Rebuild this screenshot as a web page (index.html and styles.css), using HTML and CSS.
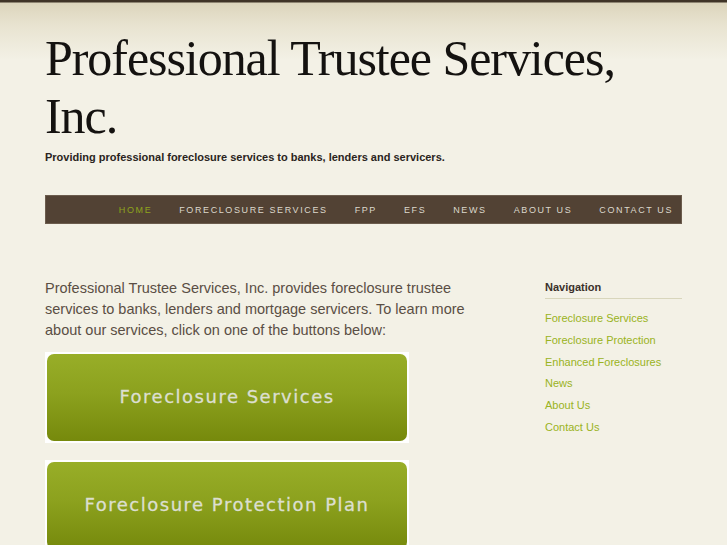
FILE: index.html
```html
<!DOCTYPE html>
<html>
<head>
<meta charset="utf-8">
<link rel="stylesheet" href="styles.css">
</head>
<body>
<div class="page">
  <header class="header">
    <h1 class="title">Professional Trustee Services, Inc.</h1>
    <p class="tagline">Providing professional foreclosure services to banks, lenders and servicers.</p>
  </header>
  <nav class="menu">
    <a class="menu-item active" href="#">Home</a>
    <a class="menu-item" href="#">Foreclosure Services</a>
    <a class="menu-item" href="#">FPP</a>
    <a class="menu-item" href="#">EFS</a>
    <a class="menu-item" href="#">News</a>
    <a class="menu-item" href="#">About Us</a>
    <a class="menu-item" href="#">Contact Us</a>
  </nav>
  <div class="content">
    <main class="main">
      <p class="intro">Professional Trustee Services, Inc. provides foreclosure trustee services to banks, lenders and mortgage servicers. To learn more about our services, click on one of the buttons below:</p>
      <a class="btn-frame" href="#"><span class="btn">Foreclosure Services</span></a>
      <a class="btn-frame" href="#"><span class="btn">Foreclosure Protection Plan</span></a>
    </main>
    <aside class="sidebar">
      <h3 class="side-title">Navigation</h3>
      <ul class="side-list">
        <li><a href="#">Foreclosure Services</a></li>
        <li><a href="#">Foreclosure Protection</a></li>
        <li><a href="#">Enhanced Foreclosures</a></li>
        <li><a href="#">News</a></li>
        <li><a href="#">About Us</a></li>
        <li><a href="#">Contact Us</a></li>
      </ul>
    </aside>
  </div>
</div>
</body>
</html>
```
FILE: styles.css
```css
html, body {
  margin: 0;
  padding: 0;
}
body {
  background: #f3f1e6 linear-gradient(to bottom, #3f3427 0, #3f3427 2px, #dcd5bc 3px, #e8e3d0 25px, #f3f1e6 60px) no-repeat;
  background-size: 100% 80px;
  font-family: "Liberation Sans", Arial, sans-serif;
  color: #5a4e44;
  min-height: 545px;
  overflow: hidden;
}
.page {
  width: 637px;
  margin-left: 45px;
}
.header {
  padding-top: 29px;
}
.title {
  font-family: "Liberation Serif", "Times New Roman", serif;
  font-weight: normal;
  font-size: 50px;
  line-height: 58px;
  color: #141210;
  margin: 0;
  letter-spacing: -1.05px;
}
.tagline {
  margin: 6px 0 0;
  font-size: 11px;
  font-weight: bold;
  color: #2a2420;
}
.menu {
  margin-top: 32px;
  height: 29px;
  background: #524234;
  border: 1px solid #6b5c4d;
  box-sizing: border-box;
  display: flex;
  justify-content: flex-end;
  align-items: center;
  gap: 27px;
  padding-right: 8px;
}
.menu-item {
  font-size: 9px;
  letter-spacing: 1.6px;
  text-transform: uppercase;
  color: #dcd8cc;
  text-decoration: none;
  padding-top: 1px;
}
.menu-item.active {
  color: #8ea21c;
}
.content {
  display: flex;
  justify-content: space-between;
  margin-top: 54px;
}
.main {
  width: 440px;
}
.intro {
  margin: 0 0 11px;
  font-size: 14.5px;
  line-height: 21px;
  color: #5a4e44;
}
.btn-frame {
  display: block;
  width: 364px;
  height: 91px;
  background: #ffffff;
  padding: 2px;
  box-sizing: border-box;
  margin-bottom: 17px;
  text-decoration: none;
}
.btn {
  display: flex;
  align-items: center;
  justify-content: center;
  height: 100%;
  border-radius: 7px;
  background: linear-gradient(to bottom, #98ae28 0%, #8ca11e 45%, #76890c 100%);
  font-family: "DejaVu Sans", Verdana, sans-serif;
  font-size: 18px;
  letter-spacing: 1.5px;
  color: #dcdfd0;
  -webkit-text-stroke: 0.3px #dcdfd0;
  padding-bottom: 2px;
  box-sizing: border-box;
}
.sidebar {
  width: 137px;
  padding-top: 3px;
}
.side-title {
  margin: 0;
  font-size: 11px;
  font-weight: bold;
  color: #3a302a;
  padding-bottom: 5px;
  border-bottom: 1px solid #d8d6bc;
}
.side-list {
  list-style: none;
  margin: 9px 0 0;
  padding: 0;
}
.side-list li {
  font-size: 11px;
  line-height: 21.8px;
}
.side-list a {
  color: #9ab322;
  text-decoration: none;
}
```
